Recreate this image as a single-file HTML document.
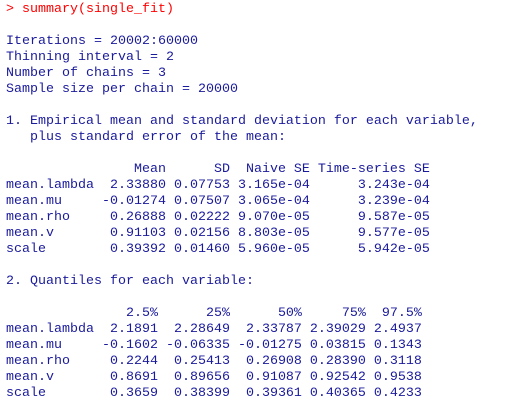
<!DOCTYPE html>
<html><head><style>
html,body{margin:0;padding:0;background:#fff;width:522px;height:408px;overflow:hidden}
pre{margin:0;padding:0 0 0 6px;font-family:"Liberation Mono",monospace;font-size:13.33px;line-height:16px;color:#1a1a9c;position:relative;top:2px}
.r{color:#ff0000}
</style></head><body><pre><span class="r">&gt; summary(single_fit)</span>

Iterations = 20002:60000
Thinning interval = 2
Number of chains = 3
Sample size per chain = 20000

1. Empirical mean and standard deviation for each variable,
   plus standard error of the mean:

                Mean      SD  Naive SE Time-series SE
mean.lambda  2.33880 0.07753 3.165e-04      3.243e-04
mean.mu     -0.01274 0.07507 3.065e-04      3.239e-04
mean.rho     0.26888 0.02222 9.070e-05      9.587e-05
mean.v       0.91103 0.02156 8.803e-05      9.577e-05
scale        0.39392 0.01460 5.960e-05      5.942e-05

2. Quantiles for each variable:

               2.5%      25%      50%     75%  97.5%
mean.lambda  2.1891  2.28649  2.33787 2.39029 2.4937
mean.mu     -0.1602 -0.06335 -0.01275 0.03815 0.1343
mean.rho     0.2244  0.25413  0.26908 0.28390 0.3118
mean.v       0.8691  0.89656  0.91087 0.92542 0.9538
scale        0.3659  0.38399  0.39361 0.40365 0.4233
</pre></body></html>
